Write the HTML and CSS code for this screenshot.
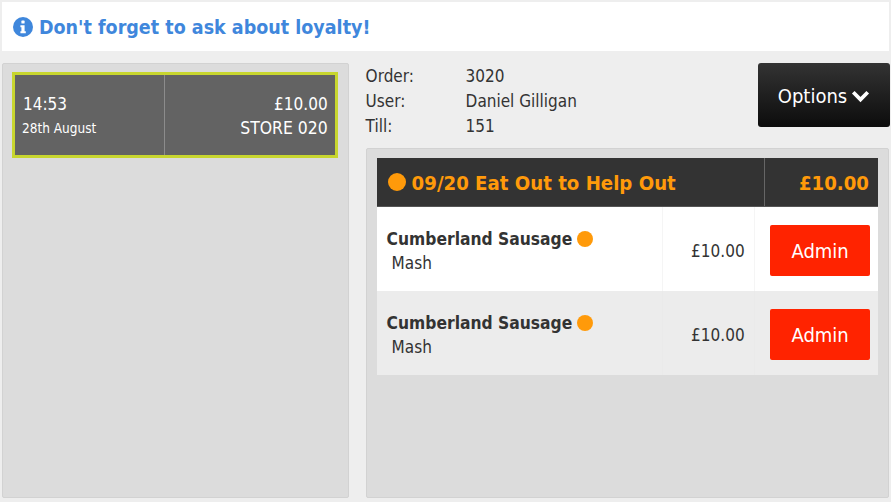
FILE: index.html
```html
<!DOCTYPE html>
<html lang="en">
<head>
<meta charset="utf-8">
<title>Order</title>
<link rel="stylesheet" href="styles.css">
</head>
<body>
<header class="banner">
  <svg class="info" viewBox="0 0 20 20" aria-hidden="true"><circle cx="10" cy="10" r="10" fill="#3f87dc"/><rect x="8.4" y="3.6" width="3.2" height="3" rx=".6" fill="#fff"/><path d="M7.4 8.2h4.2v6h1.2v2H7.4v-2h1v-4h-1z" fill="#fff"/></svg>
  <span>Don't forget to ask about loyalty!</span>
</header>
<main class="layout">
  <section class="panel orders">
    <div class="card">
      <div class="card-left"><div class="time">14:53</div><div class="date">28th August</div></div>
      <div class="card-right"><div class="amount">£10.00</div><div>STORE 020</div></div>
    </div>
  </section>
  <section class="detail">
    <div class="detail-top">
      <dl class="meta">
        <dt>Order:</dt><dd>3020</dd>
        <dt>User:</dt><dd>Daniel Gilligan</dd>
        <dt>Till:</dt><dd>151</dd>
      </dl>
      <button class="options">Options
        <svg class="chev" viewBox="0 0 16 12" aria-hidden="true"><path d="M1.8 2.8l6.2 6.2 6.2-6.2" fill="none" stroke="#fff" stroke-width="3.2"/></svg>
      </button>
    </div>
    <div class="panel items">
      <div class="head">
        <div class="head-title"><span class="dot dot-lg"></span>09/20 Eat Out to Help Out</div>
        <div class="head-total">£10.00</div>
      </div>
      <div class="row">
        <div class="c-name"><div class="name">Cumberland Sausage <span class="dot"></span></div><div class="sub">Mash</div></div>
        <div class="c-price">£10.00</div>
        <div class="c-act"><button class="admin">Admin</button></div>
      </div>
      <div class="row alt">
        <div class="c-name"><div class="name">Cumberland Sausage <span class="dot"></span></div><div class="sub">Mash</div></div>
        <div class="c-price">£10.00</div>
        <div class="c-act"><button class="admin">Admin</button></div>
      </div>
    </div>
  </section>
</main>
</body>
</html>
```
FILE: styles.css
```css
* { box-sizing: border-box; }
html, body { margin: 0; height: 100%; }
body {
  width: 891px; height: 502px; overflow: hidden;
  background: #eee; padding: 2px;
  font-family: "DejaVu Sans", sans-serif; font-stretch: condensed;
  font-size: 17px; color: #333;
}
.banner {
  height: 49px; background: #fff;
  display: flex; align-items: center; gap: 6px; padding-left: 11px;
  color: #3f87dc; font-size: 19.5px; font-weight: 700;
}
.banner span { padding-top: 2px; }
.info { width: 20px; height: 20px; }
.layout { display: flex; margin-top: 12px; height: 435px; }
.panel { background: #dcdcdc; border: 1px solid #d2d2d2; border-radius: 2px; }
.orders { width: 347px; padding: 8px 10px 8px 9px; }
.card {
  height: 86px; display: flex; color: #fff;
  background: #636363; border: 3px solid #c8d62f;
}
.card-left { width: 150px; border-right: 1px solid #8c8c8c; padding: 17px 0 0 8px; }
.time { font-size: 17px; line-height: 24px; }
.date { font-size: 13.5px; line-height: 24px; margin-left: -1px; }
.card-right { flex: 1; text-align: right; padding: 17px 7px 0 0; font-size: 17.4px; line-height: 24px; }
.amount { font-size: 17px; }
.detail { width: 524px; margin-left: 17px; display: flex; flex-direction: column; }
.detail-top { height: 85px; display: flex; justify-content: space-between; }
.meta {
  margin: 0; padding-top: 1px; display: grid; grid-template-columns: 100px auto; grid-auto-rows: 25px;
  align-content: start; line-height: 25px;
}
.meta dd { margin: 0; }
.options {
  width: 132px; height: 64px; margin-right: -1px; border: 0; border-radius: 3px; padding: 2px 0 0;
  background: linear-gradient(#333, #0c0c0c); color: #fff;
  font: condensed 20px "DejaVu Sans", sans-serif;
  display: flex; align-items: center; justify-content: center; gap: 4px;
}
.chev { width: 19px; height: 14px; }
.items { flex: 1; padding: 9px 10px; }
.head {
  height: 49px; display: flex; background: #333; color: #ff9a0a;
  font-weight: 700; font-size: 20.2px; align-items: stretch;
  border-bottom: 1px solid #555;
}
.head-title { width: 388px; border-right: 1px solid #666; padding: 2px 0 0 11px; display: flex; align-items: center; gap: 6px; }
.head-total { flex: 1; text-align: right; padding: 2px 9px 0 0; align-self: center; }
.dot { display: inline-block; width: 16px; height: 16px; border-radius: 50%; background: #ff9a0a; vertical-align: -2px; margin-left: -1px; }
.dot-lg { width: 18px; height: 18px; margin: 0 0 2px; }
.row { height: 84px; display: flex; background: #fff; }
.row.alt { background: #ececec; }
.c-name { width: 286px; padding: 20px 0 0 10px; border-right: 1px solid #f5f5f5; }
.alt .c-name { border-color: #eaeaea; }
.name { font-weight: 700; font-size: 17.3px; line-height: 25px; }
.sub { padding-left: 5px; line-height: 22px; }
.c-price { width: 92px; border-right: 1px solid #f5f5f5; padding-right: 9px; text-align: right; line-height: 89px; }
.alt .c-price { border-color: #eaeaea; }
.c-act { flex: 1; display: flex; align-items: flex-start; padding: 18px 0 0 15px; }
.admin {
  width: 100px; height: 51px; border: 0; border-radius: 2px; padding: 0 0 0 1px;
  background: #ff2300; color: #fff; font: condensed 20px "DejaVu Sans", sans-serif;
}
```
